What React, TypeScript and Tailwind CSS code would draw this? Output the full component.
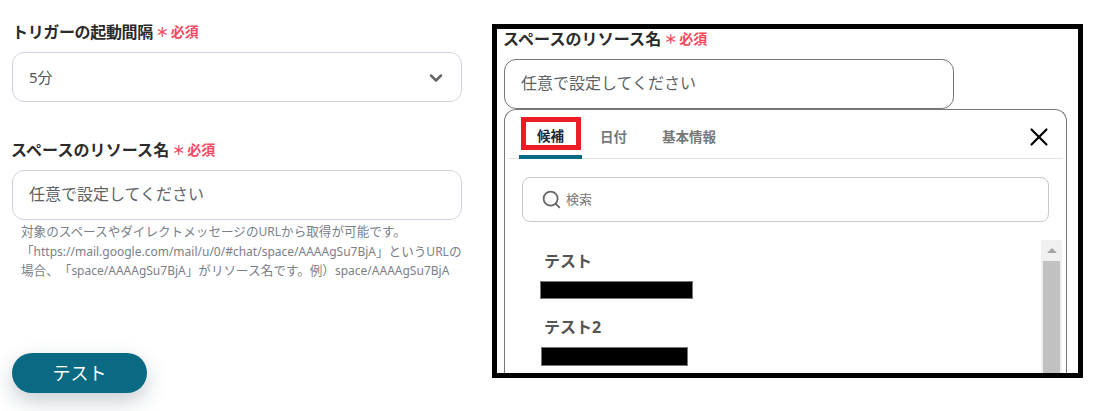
import { ChevronDown, Search, X } from "lucide-react";

const font = "font-['Noto_Sans','Noto_Sans_CJK_JP',sans-serif]";

const FieldLabel = ({ text, wide }: { text: string; wide?: boolean }) => (
  <div className={wide ? "flex items-center h-5 -ml-[1px]" : "flex items-center h-5"}>
    <span className={wide ? "text-[16px] font-bold text-[#2b2b2b] leading-5 tracking-[0.1px]" : "text-[16px] font-bold text-[#2b2b2b] leading-5 tracking-[-0.35px]"}>{text}</span>
    <span className="ml-[3px] w-[13px] text-center text-[13px] font-bold text-[#f6495f] leading-5">＊</span>
    <span className="ml-[2px] text-[14px] font-bold text-[#f6495f] leading-5">必須</span>
  </div>
);

const Latin = ({ children }: { children: string }) => (
  <span className="text-[12px]">{children}</span>
);

const App = () => {
  return (
    <div className={`${font} w-[1100px] h-[411px] bg-white flex overflow-hidden`}>
      {/* left */}
      <div className="w-[492px] pl-3 pt-[22px] flex flex-col">
        <div className="w-[450px]">
          <FieldLabel text="トリガーの起動間隔" />
          <div className="mt-[10px] h-[50px] border border-[#d0d4de] rounded-xl px-[16px] flex items-center justify-between">
            <span className="text-[15px] text-[#555]">5分</span>
            <ChevronDown className="w-[20px] h-[20px] mt-[2px] -mr-[1px] text-[#666]" strokeWidth={3} />
          </div>
        </div>
        <div className="w-[450px] mt-[38px]">
          <FieldLabel text="スペースのリソース名" wide />
          <div className="mt-[10px] h-[50px] border border-[#d0d4de] rounded-xl px-[16px] pb-[2px] flex items-center">
            <span className="text-base text-[#5f6368]">任意で設定してください</span>
          </div>
          <p className="mt-[2px] pl-[9px] text-[12.6px] leading-[19.5px] text-[#7b8088] whitespace-nowrap [text-spacing-trim:space-all]">
            対象のスペースやダイレクトメッセージの<Latin>URL</Latin>から取得が可能です。
            <br />
            「<Latin>https://mail.google.com/mail/u/0/#chat/space/AAAAgSu7BjA</Latin>」という<Latin>URL</Latin>の
            <br />
            場合、「<Latin>space/AAAAgSu7BjA</Latin>」がリソース名です。例）<Latin>space/AAAAgSu7BjA</Latin>
          </p>
        </div>
        <button className="mt-[72px] w-[135px] h-10 shrink-0 rounded-full bg-[#0b6a83] text-white text-lg shadow-[0_8px_20px_rgba(30,60,80,0.25)]">
          テスト
        </button>
      </div>

      {/* right */}
      <div className="mt-6 w-[591px] h-[354px] border-[5px] border-black overflow-hidden pl-[7px] flex flex-col shrink-0">
        <div className="w-[450px] h-[20px] shrink-0">
          <FieldLabel text="スペースのリソース名" wide />
        </div>
        <div className="mt-[10px] w-[450px] h-[50px] shrink-0 border border-[#777] rounded-xl px-[16px] pb-[2px] flex items-center">
          <span className="text-base text-[#5f6368]">任意で設定してください</span>
        </div>
        <div className="w-[563px] flex-1 border border-[#777] border-b-0 rounded-t-xl flex flex-col px-[3px]">
          {/* tabs */}
          <div className="h-[49px] shrink-0 border-b border-[#e2e2e2] flex items-start pl-[11px] relative">
            <div className="w-[63px] h-[49px] border-b-[4px] border-[#0b6a83] relative flex justify-center pt-[7px]">
              <div className="w-[60px] h-[33px] border-[5px] border-[#ed1c24] flex items-end justify-center">
                <span className="text-[13.5px] font-bold text-[#1f2a37] leading-[18px]">候補</span>
              </div>
            </div>
            <span className="ml-[18px] mt-[17px] text-[13.5px] font-bold text-[#777] leading-5">日付</span>
            <span className="ml-[35px] mt-[17px] text-[13.5px] font-bold text-[#777] leading-5">基本情報</span>
            <X className="absolute right-[9px] top-[12px] w-[30px] h-[30px] text-black" strokeWidth={1.7} />
          </div>
          {/* search */}
          <div className="mt-[18px] ml-[14px] w-[527px] h-[45px] shrink-0 border border-[#c8c8c8] rounded-lg flex items-center pl-[19px]">
            <Search className="w-[21px] h-[21px] -ml-[1px] text-[#666]" strokeWidth={2} />
            <span className="ml-[4px] mt-[1px] text-[13px] text-[#777]">検索</span>
          </div>
          {/* list */}
          <div className="mt-[18px] flex-1 flex min-h-0 overflow-hidden">
            <div className="flex-1 pl-[36px]">
              <div className="text-[16px] font-bold text-[#555] leading-5 mt-[11px]">テスト</div>
              <div className="-ml-[4px] mt-[10px] w-[153px] h-[18px] bg-black border border-[#777]" />
              <div className="text-[16px] font-bold text-[#555] leading-5 mt-[18px]">テスト2</div>
              <div className="-ml-[3px] mt-[10px] w-[147px] h-[19px] bg-black border border-[#777]" />
            </div>
            <div className="w-[21px] mr-[1px] bg-[#f0f0f0] flex flex-col items-center shrink-0">
              <div className="h-[21px] w-full flex items-center justify-center">
                <div className="w-0 h-0 border-x-[5px] border-x-transparent border-b-[5px] border-b-[#a3a3a3]" />
              </div>
              <div className="w-[17px] flex-1 bg-[#c1c1c1]" />
            </div>
          </div>
        </div>
      </div>
    </div>
  );
};

export default App;
